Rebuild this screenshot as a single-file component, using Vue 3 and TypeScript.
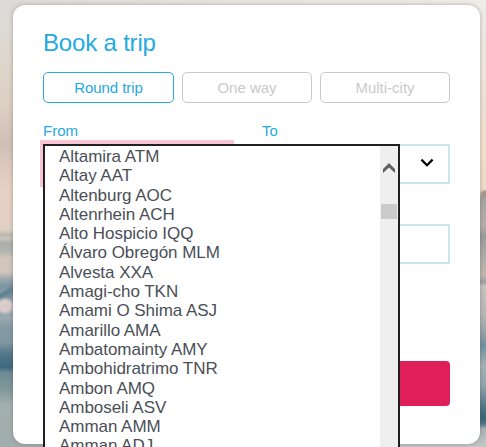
<script setup lang="ts">
import { ref } from 'vue'

const tripTypes: string[] = ['Round trip', 'One way', 'Multi-city']
const selected = ref<string>('Round trip')

const airports: string[] = [
  'Altamira ATM',
  'Altay AAT',
  'Altenburg AOC',
  'Altenrhein ACH',
  'Alto Hospicio IQQ',
  'Álvaro Obregón MLM',
  'Alvesta XXA',
  'Amagi-cho TKN',
  'Amami O Shima ASJ',
  'Amarillo AMA',
  'Ambatomainty AMY',
  'Ambohidratrimo TNR',
  'Ambon AMQ',
  'Amboseli ASV',
  'Amman AMM',
  'Amman ADJ',
]
</script>

<template>
  <main class="page">
    <div class="sky sky-left"></div>
    <div class="sky sky-right"></div>
    <section class="card">
      <h1 class="title">Book a trip</h1>
      <div class="tabs">
        <button
          v-for="type in tripTypes"
          :key="type"
          type="button"
          class="tab"
          :class="{ active: type === selected }"
          @click="selected = type"
        >{{ type }}</button>
      </div>
      <div class="places">
        <div class="place">
          <span class="label">From</span>
          <div class="field focused"></div>
        </div>
        <div class="place">
          <span class="label">To</span>
          <div class="field">
            <svg class="chevron" width="14" height="10" viewBox="0 0 14 10">
              <path d="M1.4 1.6 7 7.2 12.6 1.6" fill="none" stroke="#000" stroke-width="2.2" />
            </svg>
          </div>
        </div>
      </div>
      <div class="field dates"></div>
      <button type="button" class="submit" aria-label="Search"></button>
      <div class="dropdown">
        <ul class="options">
          <li v-for="airport in airports" :key="airport" class="option">{{ airport }}</li>
        </ul>
        <div class="scrollbar">
          <svg class="arrow" width="12" height="10" viewBox="0 0 12 10">
            <path d="M0 6 6 0 12 6V10L6 4.4 0 10Z" fill="#606060" />
          </svg>
          <div class="thumb"></div>
        </div>
      </div>
    </section>
  </main>
</template>

<style>
body {
  margin: 0;
  overflow: hidden;
}
</style>

<style scoped>
.page {
  position: relative;
  box-sizing: border-box;
  width: 486px;
  height: 447px;
  padding: 5px 6px 3px 13px;
  overflow: hidden;
  background:
    linear-gradient(90deg, #a2adad, #b9bdbd 50%, #c8c8c8) 0 100% / 100% 40px no-repeat,
    linear-gradient(90deg, #dcdbd8, #e8e5e0 50%, #efebe6);
  font-family: "Liberation Sans", Arial, sans-serif;
}
.sky {
  position: absolute;
  top: 0;
  bottom: 0;
}
.sky-left {
  left: 0;
  width: 26px;
  background:
    radial-gradient(ellipse 10px 9px at 5px 306px, #d9ccca 60%, transparent),
    linear-gradient(150deg, transparent 42%, #5f8091 55%, transparent 90%) 0 279px / 14px 22px no-repeat,
    linear-gradient(180deg, #dcdbd8 0, #dedad5 30px, #ded5ca 70px, #dccfc3 105px, #cfc0b7 145px,
      #dac8bf 163px, #e4d2c4 190px, #e0cfc3 230px, #b9b7b0 235px, #cfc6bd 238px, #a9aeaa 243px,
      #b5b6b0 252px, #d1c5bc 258px, #d3c6be 272px, #a8b0b1 277px, #7c97a3 285px, #8da2aa 300px,
      #9aa9b0 318px, #8299a5 328px, #8198a2 342px, #52778a 354px, #3e687d 367px, #6e8b94 373px,
      #839999 390px, #a4afb0 405px, #a2adad 447px);
}
.sky-right {
  right: 0;
  width: 18px;
  background:
    radial-gradient(ellipse 5px 5px at 17px 194px, #a3978c 45%, transparent),
    linear-gradient(180deg, #efebe6 0, #eee8e1 50px, #efe2d6 110px, #f4e0ce 150px, #eedac8 190px,
      #a5a29c 198px, #b0aaa4 212px, #b8aea9 225px, #999b99 236px, #aeaba5 255px, #c1b9b0 275px,
      #9d9e9c 282px, #c6c2bf 286px, #b7b7b7 315px, #8b9ba3 338px, #70919e 345px, #a2b1b4 365px,
      #93a6ab 385px, #557b8b 405px, #376578 418px, #52768a 424px, #a9b3b5 429px, #c5c7c7 447px);
}
.card {
  position: relative;
  box-sizing: border-box;
  height: 439px;
  padding: 23px 30px 38px;
  border-radius: 12px;
  background: #fff;
  box-shadow: 0 0 4px rgba(70, 55, 45, 0.35);
}
.title {
  margin: 0;
  color: #24a9e1;
  font-size: 24px;
  font-weight: 400;
  line-height: 30px;
  letter-spacing: -0.18px;
}
.tabs {
  display: grid;
  grid-template-columns: 131px 130px 130px;
  gap: 8px;
  margin-top: 14px;
}
.tab {
  box-sizing: border-box;
  height: 31px;
  padding: 0;
  border: 1px solid #c8c8c8;
  border-radius: 5px;
  background: #fff;
  color: #cacaca;
  font: 15px/29px "Liberation Sans", Arial, sans-serif;
}
.tab.active {
  border-color: #24a9e1;
  color: #24a9e1;
  letter-spacing: -0.08px;
}
.places {
  display: grid;
  grid-template-columns: 188px 188px;
  justify-content: space-between;
  margin-top: 18px;
}
.label {
  display: block;
  height: 23px;
  color: #24a9e1;
  font-size: 15px;
  line-height: 20px;
}
.field {
  box-sizing: border-box;
  display: flex;
  align-items: center;
  justify-content: flex-end;
  height: 40px;
  padding-right: 14px;
  border: 2px solid #cae7f0;
  background: #fff;
}
.focused {
  box-shadow: 0 0 0 3px #f7c5d4, 0 -1px 0 3px #f7c5d4;
}
.chevron {
  display: block;
  margin-top: -3px;
}
.dates {
  margin-top: 40px;
}
.submit {
  display: block;
  width: 100%;
  height: 45px;
  margin-top: 97px;
  padding: 0;
  border: 0;
  border-radius: 4px;
  background: #e01e5a;
}
.dropdown {
  position: absolute;
  top: 139px;
  left: 30px;
  box-sizing: border-box;
  display: flex;
  width: 357px;
  height: 310px;
  overflow: hidden;
  border: 2px solid #202020;
  background: #fff;
}
.options {
  flex: 1;
  margin: 0;
  padding: 1px 0 0 14px;
  list-style: none;
}
.option {
  color: #4a4f57;
  font-size: 17px;
  line-height: 19.3px;
  letter-spacing: -0.04px;
  white-space: nowrap;
}
.scrollbar {
  display: flex;
  flex-direction: column;
  align-items: center;
  width: 18px;
  padding-top: 17px;
  background: #efefef;
}
.arrow {
  display: block;
  flex: none;
}
.thumb {
  width: 16px;
  height: 15px;
  margin-top: 31px;
  background: #cbcbcb;
}
</style>
